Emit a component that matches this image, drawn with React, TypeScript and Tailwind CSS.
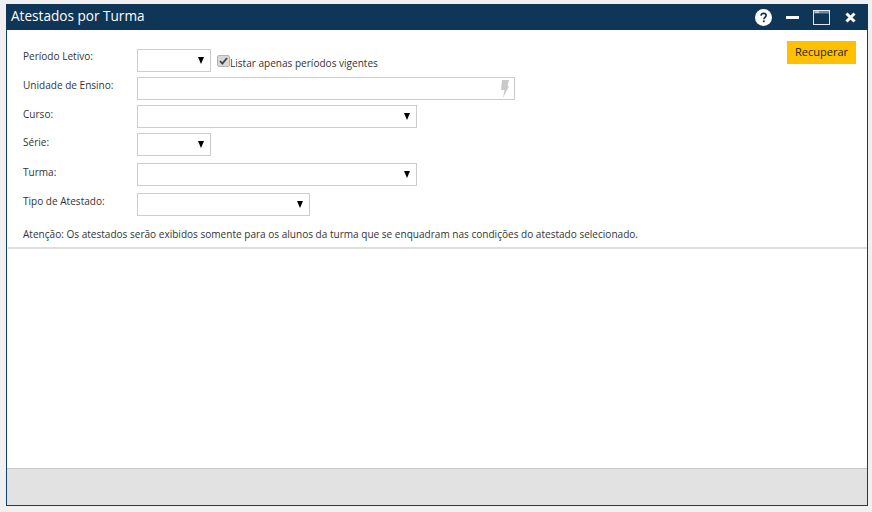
import React from 'react';

const font = "font-['Open_Sans','Noto_Sans',sans-serif]";

const Arrow = () => <span className="h-0 w-0 border-x-[3.5px] border-t-[7px] border-x-transparent border-t-black" />;

const Select = ({ width }: { width: string }) => (
  <div className={`flex h-[23px] items-center justify-end border border-[#cccccc] bg-white pr-[6px] ${width}`}>
    <Arrow />
  </div>
);

const Row = ({ label, className, labelClass, children }: { label: string; className: string; labelClass: string; children: React.ReactNode }) => (
  <div className={`flex items-start ${className}`}>
    <label className={`w-[114px] text-[10.05px] leading-[14px] text-[#333333] ${labelClass}`}>{label}</label>
    {children}
  </div>
);

export default function App() {
  return (
    <div className={`h-[512px] w-[872px] bg-[#f0f0f0] pl-1.5 pr-1 pt-1 pb-[6px] ${font}`}>
      <div className="flex h-full flex-col border border-t-0 border-[#0f3f6b] bg-white">
        <header className="-mx-px flex h-[26px] shrink-0 items-center justify-between bg-[#0f3557] pl-[5px] pr-[12px] text-white">
          <h1 className="-mt-px text-[13.6px] font-normal">Atestados por Turma</h1>
          <div className="flex items-center">
            <svg width="17" height="17" viewBox="0 0 17 17" className="mr-[14px]">
              <circle cx="8.5" cy="8.5" r="8.5" fill="#fff" />
              <path d="M6 6.6c.2-1.5 1.2-2.2 2.6-2.2 1.5 0 2.5.9 2.5 2.1 0 1.9-2.1 1.9-2.2 3.7" fill="none" stroke="#0f3557" strokeWidth="1.7" />
              <rect x="7.9" y="11.4" width="1.8" height="1.8" fill="#0f3557" />
            </svg>
            <span className="mr-[14px] h-[3px] w-[13px] bg-white" />
            <svg width="17" height="15" viewBox="0 0 17 15" className="mr-[15px]">
              <rect x="0.5" y="0.5" width="16" height="14" fill="none" stroke="#e4e8ec" />
              <rect x="1" y="1" width="15" height="2.5" fill="#6f8aa0" />
              <rect x="2" y="1.5" width="4" height="1.2" fill="#e4e8ec" />
            </svg>
            <svg width="11" height="11" viewBox="0 0 11 11">
              <path d="M1.5 1.5l8 8M9.5 1.5l-8 8" stroke="#fff" strokeWidth="3" />
            </svg>
          </div>
        </header>

        <section className="relative h-[217px] shrink-0 px-[16px] pt-[19px]">
          <button className="absolute right-[11px] top-[11px] h-[23px] w-[69px] bg-[#ffc000] text-[11px] text-[#222222]">Recuperar</button>
          <Row label="Período Letivo:" className="" labelClass="">
            <Select width="w-[74px]" />
            <div className="ml-[6px] flex items-start pt-[5px]">
              <span className="mt-px flex h-[12px] w-[13px] items-center justify-center rounded-[2px] border border-[#b5b5b5] bg-[#d8d8d8]">
                <svg width="9" height="8" viewBox="0 0 9 8"><path d="M1 4l2.4 2.6L8 1" fill="none" stroke="#444" strokeWidth="1.8" /></svg>
              </span>
              <span className="text-[10.05px] leading-[18px] text-[#333333]">Listar apenas períodos vigentes</span>
            </div>
          </Row>
          <Row label="Unidade de Ensino:" className="mt-[5px]" labelClass="pt-px">
            <div className="flex h-[23px] w-[378px] items-center justify-end border border-[#cccccc] pr-[5px]">
              <svg width="8" height="18" viewBox="0 0 8 18"><path d="M1 0h7L6.5 6H8L2 18l1.5-8H0z" fill="#c9c9c9" /></svg>
            </div>
          </Row>
          <Row label="Curso:" className="mt-[5px]" labelClass="pt-[2px]"><Select width="w-[280px]" /></Row>
          <Row label="Série:" className="mt-[5px]" labelClass="pt-[2px]"><Select width="w-[74px]" /></Row>
          <Row label="Turma:" className="mt-[7px]" labelClass="pt-[2px]"><Select width="w-[280px]" /></Row>
          <Row label="Tipo de Atestado:" className="mt-[7px]" labelClass="pt-px"><Select width="w-[173px]" /></Row>
          <p className="mt-[11px] text-[10.05px] leading-[14px] text-[#333333]">Atenção: Os atestados serão exibidos somente para os alunos da turma que se enquadram nas condições do atestado selecionado.</p>
        </section>

        <div className="ml-px h-[2px] shrink-0 bg-[#dddddd]" />
        <main className="flex-1" />
        <footer className="h-[37px] shrink-0 border-t border-[#c8c8c8] bg-[#e2e2e2]" />
      </div>
    </div>
  );
}
